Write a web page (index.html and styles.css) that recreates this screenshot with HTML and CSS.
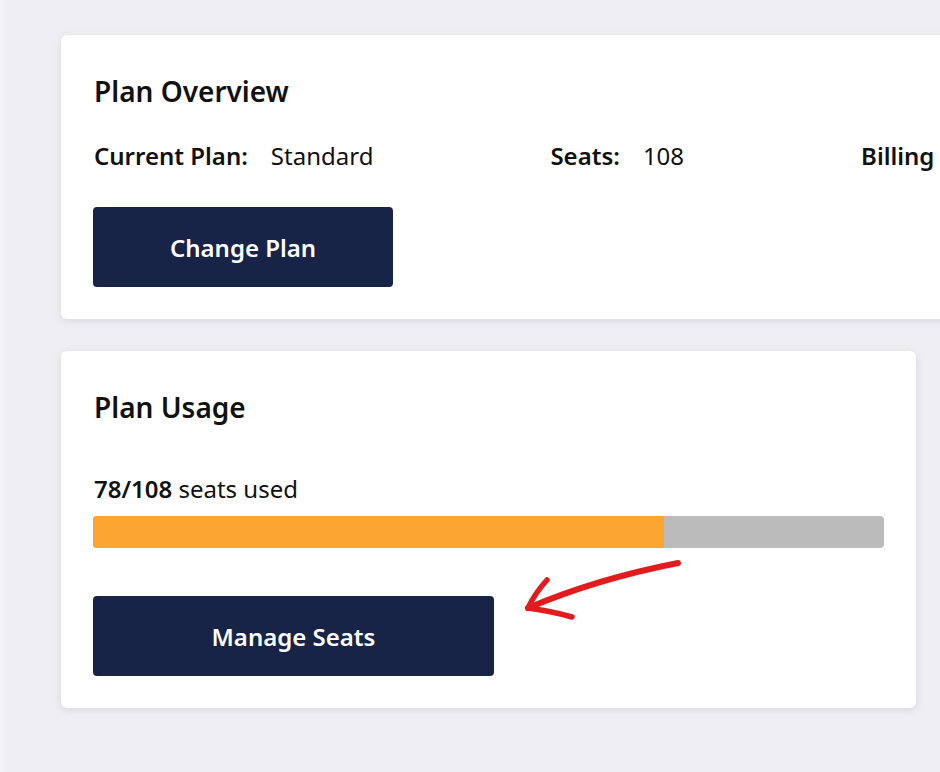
FILE: index.html
```html
<!DOCTYPE html>
<html lang="en">
<head>
<meta charset="utf-8">
<title>Plan</title>
<link rel="stylesheet" href="styles.css">
</head>
<body>
<main class="page">
  <section class="card card-overview">
    <h2 class="card-title">Plan Overview</h2>
    <div class="facts">
      <div class="fact"><span class="fact-label">Current Plan:</span><span class="fact-value">Standard</span></div>
      <div class="fact"><span class="fact-label">Seats:</span><span class="fact-value">108</span></div>
      <div class="fact"><span class="fact-label">Billing Cycle:</span><span class="fact-value">Monthly</span></div>
    </div>
    <button class="btn btn-change">Change Plan</button>
  </section>

  <section class="card card-usage">
    <h2 class="card-title">Plan Usage</h2>
    <p class="usage-text"><strong>78/108</strong> seats used</p>
    <div class="bar"><div class="bar-fill" style="width:72.2%"></div></div>
    <button class="btn btn-manage">Manage Seats</button>
    <svg class="arrow" width="230" height="80" viewBox="0 0 230 80" aria-hidden="true">
      <path d="M157 12 Q 75 28 7 57" fill="none" stroke="#e41b1c" stroke-width="6" stroke-linecap="round"/>
      <path d="M26 29 Q 14 42 7 57 Q 30 60 51 66" fill="none" stroke="#e41b1c" stroke-width="5.5" stroke-linecap="round" stroke-linejoin="round"/>
    </svg>
  </section>
</main>
</body>
</html>
```

FILE: styles.css
```css
html, body {
  margin: 0;
  padding: 0;
  overflow: hidden;
}
body {
  background: #eeeef3;
  background-image: linear-gradient(to right, #f4f4f7 0, #eeeef3 10px);
  font-family: "Noto Sans", "Open Sans", sans-serif;
  color: #111;
  width: 940px;
  height: 772px;
}
.page {
  padding: 35px 0 0 61px;
  display: flex;
  flex-direction: column;
  gap: 32px;
}
.card {
  background: #fff;
  border-radius: 6px;
  box-shadow: 0 2px 8px rgba(20, 20, 60, 0.10);
  padding: 32px 32px 32px 33px;
  box-sizing: border-box;
}
.card-overview {
  width: 1200px;
}
.card-usage {
  width: 855px;
  position: relative;
}
.card-title {
  margin: 0;
  font-size: 28px;
  font-weight: 600;
  line-height: 48px;
}
.facts {
  display: flex;
  gap: 177px;
  margin-top: 26px;
  font-size: 24px;
  line-height: 30px;
  white-space: nowrap;
}
.fact-label {
  font-weight: 600;
  margin-right: 23px;
}
.btn {
  display: flex;
  align-items: center;
  justify-content: center;
  height: 80px;
  border: 0;
  border-radius: 4px;
  background: #172347;
  color: #fff;
  font-family: inherit;
  font-size: 24px;
  font-weight: 600;
  padding: 0;
}
.btn-change {
  width: 300px;
  margin-top: 36px;
  margin-left: -1px;
}
.btn-manage {
  width: 401px;
  margin-top: 48px;
  margin-left: -1px;
}
.usage-text {
  margin: 43px 0 0;
  font-size: 24px;
  line-height: 30px;
}
.usage-text strong {
  font-weight: 600;
}
.bar {
  margin-top: 12px;
  margin-left: -1px;
  height: 32px;
  background: #bbbbbb;
  border-radius: 4px;
  overflow: hidden;
}
.bar-fill {
  height: 100%;
  background: #fba531;
}
.arrow {
  position: absolute;
  left: 460px;
  top: 200px;
}
```
